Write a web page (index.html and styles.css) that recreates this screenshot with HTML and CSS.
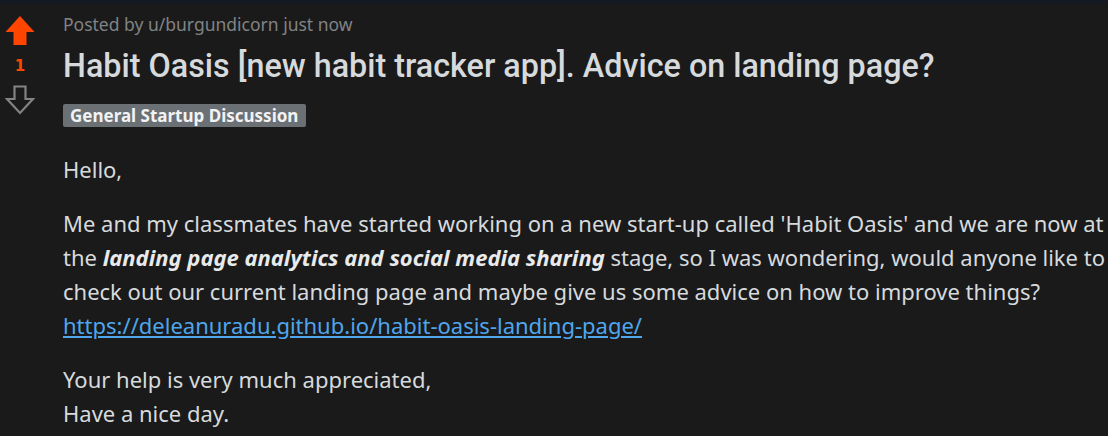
FILE: index.html
```html
<!DOCTYPE html>
<html>
<head>
<meta charset="utf-8">
<link rel="stylesheet" href="styles.css">
</head>
<body>
<div class="topbar"></div>
<div class="post">
  <div class="votes">
    <svg class="arrow" width="30" height="30" viewBox="0 0 30 30"><path d="M15 1 L29.5 17 L21.5 17 L21.5 30 L8.5 30 L8.5 17 L0.5 17 Z" fill="#ff4500"/></svg>
    <div class="score">1</div>
    <svg class="arrow down" width="30" height="30" viewBox="0 0 30 30"><path d="M9.5 1.5 L20.5 1.5 L20.5 14 L28 14 L15 28 L2 14 L9.5 14 Z" fill="none" stroke="#818384" stroke-width="2.2" stroke-linejoin="miter"/></svg>
  </div>
  <div class="content">
    <div class="meta">Posted by u/burgundicorn just now</div>
    <h1 class="title">Habit Oasis [new habit tracker app]. Advice on landing page?</h1>
    <span class="flair">General Startup Discussion</span>
    <div class="body">
      <p>Hello,</p>
      <p>Me and my classmates have started working on a new start-up called 'Habit Oasis' and we are now at the <em><strong>landing page analytics and social media sharing</strong></em> stage, so I was wondering, would anyone like to check out our current landing page and maybe give us some advice on how to improve things? <a href="#">https://deleanuradu.github.io/habit-oasis-landing-page/</a></p>
      <p>Your help is very much appreciated,<br>Have a nice day.</p>
    </div>
  </div>
</div>
</body>
</html>
```
FILE: styles.css
```css
html, body {
  margin: 0;
  padding: 0;
  background: #1a1a1b;
  overflow: hidden;
}
.topbar {
  height: 4px;
  background: #151a22;
}
.post {
  display: flex;
  align-items: flex-start;
}
.votes {
  width: 40px;
  display: flex;
  flex-direction: column;
  align-items: center;
  padding-top: 11px;
}
.arrow { display: block; }
.score {
  color: #ff4500;
  font-family: "DejaVu Sans", sans-serif;
  font-weight: bold;
  font-size: 15px;
  line-height: 16px;
  margin: 13px 0 11px;
}
.content {
  padding-left: 23px;
  padding-right: 0;
  flex: 1;
}
.meta {
  font-family: "Noto Sans", sans-serif;
  font-size: 17.5px;
  color: #818384;
  line-height: 22px;
  margin-top: 9px;
}
.title {
  font-family: Roboto, "Noto Sans", sans-serif;
  font-weight: 500;
  font-size: 32.3px;
  line-height: 38px;
  color: #d7dadc;
  margin: 12px 0 19px;
}
.flair {
  display: inline-block;
  background: #6b7075;
  color: #f2f3f4;
  font-family: "Noto Sans", sans-serif;
  font-weight: bold;
  font-size: 17px;
  line-height: 23px;
  padding: 0 8px 0 7px;
  border-radius: 2px;
}
.body {
  font-family: "Noto Sans", sans-serif;
  font-size: 22px;
  line-height: 34px;
  color: #d7dadc;
  margin-top: 25px;
}
.body p {
  margin: 0 0 20px;
}
.body strong { color: #e8eaeb; }
.body a {
  color: #4fa6ec;
  text-decoration: underline;
}
```
